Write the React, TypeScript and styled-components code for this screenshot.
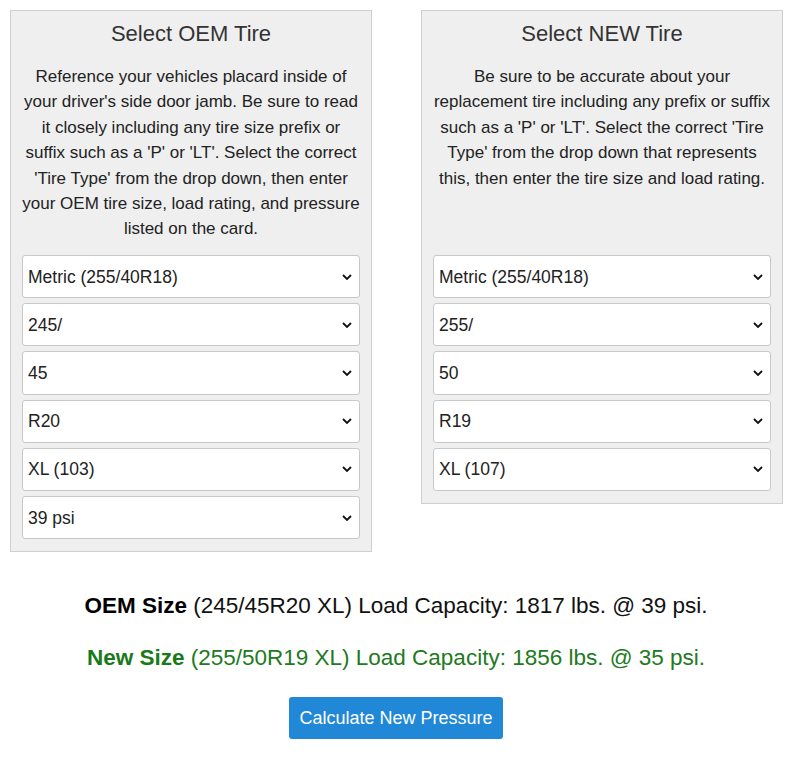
import React, { useState } from 'react';
import styled, { createGlobalStyle } from 'styled-components';

const GlobalStyle = createGlobalStyle`
  body {
    margin: 0;
    background: #fff;
    font-family: 'Liberation Sans', Arial, sans-serif;
    color: #222;
  }
`;

type Field = { options: string[]; value: string };

const oemFields: Field[] = [
  { options: ['Metric (255/40R18)', 'P-Metric (P255/40R18)', 'LT-Metric (LT255/40R18)'], value: 'Metric (255/40R18)' },
  { options: ['235/', '245/', '255/', '265/'], value: '245/' },
  { options: ['40', '45', '50', '55'], value: '45' },
  { options: ['R18', 'R19', 'R20', 'R21'], value: 'R20' },
  { options: ['SL (100)', 'XL (103)'], value: 'XL (103)' },
  { options: ['35 psi', '36 psi', '38 psi', '39 psi', '40 psi'], value: '39 psi' },
];

const newFields: Field[] = [
  { options: ['Metric (255/40R18)', 'P-Metric (P255/40R18)', 'LT-Metric (LT255/40R18)'], value: 'Metric (255/40R18)' },
  { options: ['245/', '255/', '265/'], value: '255/' },
  { options: ['45', '50', '55'], value: '50' },
  { options: ['R18', 'R19', 'R20'], value: 'R19' },
  { options: ['SL (104)', 'XL (107)'], value: 'XL (107)' },
];

const TireSelect: React.FC<{ field: Field }> = ({ field }) => {
  const [value, setValue] = useState(field.value);
  return (
    <SelectWrap>
      <Select value={value} onChange={(e) => setValue(e.target.value)}>
        {field.options.map((o) => (
          <option key={o}>{o}</option>
        ))}
      </Select>
      <Chevron viewBox="0 0 10 6" aria-hidden>
        <path d="M1 1l4 4 4-4" fill="none" stroke="#111" strokeWidth="1.8" />
      </Chevron>
    </SelectWrap>
  );
};

const TirePanel: React.FC<{ title: string; text: string; fields: Field[] }> = ({ title, text, fields }) => (
  <Panel>
    <Title>{title}</Title>
    <Intro>{text}</Intro>
    <Fields>
      {fields.map((f, i) => (
        <TireSelect key={i} field={f} />
      ))}
    </Fields>
  </Panel>
);

export default function App() {
  return (
    <Page>
      <GlobalStyle />
      <Panels>
        <TirePanel
          title="Select OEM Tire"
          text="Reference your vehicles placard inside of your driver's side door jamb. Be sure to read it closely including any tire size prefix or suffix such as a 'P' or 'LT'. Select the correct 'Tire Type' from the drop down, then enter your OEM tire size, load rating, and pressure listed on the card."
          fields={oemFields}
        />
        <TirePanel
          title="Select NEW Tire"
          text="Be sure to be accurate about your replacement tire including any prefix or suffix such as a 'P' or 'LT'. Select the correct 'Tire Type' from the drop down that represents this, then enter the tire size and load rating."
          fields={newFields}
        />
      </Panels>
      <Result>
        <strong>OEM Size</strong> (245/45R20 XL) Load Capacity: 1817 lbs. @ 39 psi.
      </Result>
      <Result $tone="new">
        <strong>New Size</strong> (255/50R19 XL) Load Capacity: 1856 lbs. @ 35 psi.
      </Result>
      <CalcButton type="button">Calculate New Pressure</CalcButton>
    </Page>
  );
}

const Page = styled.div`
  padding: 10px 14px 20px 10px;
  display: flex;
  flex-direction: column;
  align-items: center;
`;

const Panels = styled.div`
  display: flex;
  gap: 49px;
  align-items: flex-start;
  align-self: flex-start;
`;

const Panel = styled.section`
  box-sizing: border-box;
  width: 362px;
  display: flex;
  flex-direction: column;
  background: #efefef;
  border: 1px solid #cfcfcf;
  padding: 0 11px 12px;
`;

const Title = styled.h2`
  margin: 10px 0 0;
  font-size: 22px;
  line-height: 26px;
  font-weight: 400;
  color: #333;
  text-align: center;
`;

const Intro = styled.p`
  margin: 17px 0 0;
  min-height: 178px;
  font-size: 17px;
  line-height: 25.4px;
  color: #222;
  text-align: center;
`;

const Fields = styled.div`
  margin-top: 13px;
  display: flex;
  flex-direction: column;
  gap: 5px;
`;

const SelectWrap = styled.div`
  position: relative;
`;

const Select = styled.select`
  appearance: none;
  box-sizing: border-box;
  width: 100%;
  height: 43.2px;
  padding: 0 30px 0 5px;
  border: 1px solid #c8c8c8;
  border-radius: 3px;
  background: #fff;
  font-family: 'Liberation Sans', Arial, sans-serif;
  font-size: 17.5px;
  color: #222;
  outline: none;
`;

const Chevron = styled.svg`
  position: absolute;
  right: 8px;
  top: 50%;
  width: 10px;
  height: 6px;
  margin-top: -3px;
  pointer-events: none;
`;

const Result = styled.p<{ $tone?: 'new' }>`
  margin: 0;
  font-size: 22.5px;
  line-height: 26px;
  color: ${(p) => (p.$tone === 'new' ? '#217a21' : '#111')};
  text-align: center;
  margin-top: ${(p) => (p.$tone === 'new' ? '26px' : '41px')};
  strong {
    color: ${(p) => (p.$tone === 'new' ? '#1a7a1a' : '#000')};
  }
`;

const CalcButton = styled.button`
  margin-top: 26px;
  width: 214px;
  height: 42px;
  border: none;
  border-radius: 3px;
  background: #2188d8;
  color: #fff;
  font-family: 'Liberation Sans', Arial, sans-serif;
  font-size: 18px;
  cursor: pointer;
`;
